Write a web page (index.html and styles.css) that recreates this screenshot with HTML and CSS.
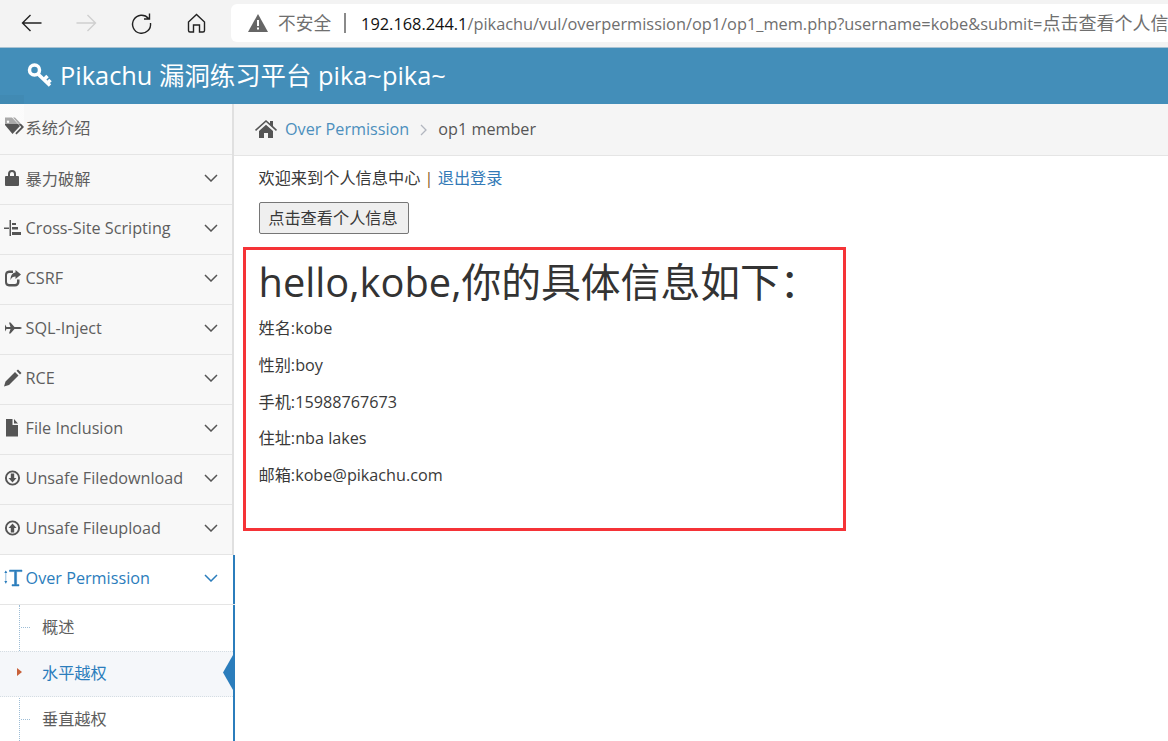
FILE: index.html
```html
<!DOCTYPE html>
<html lang="zh">
<head>
<meta charset="utf-8">
<title>Pikachu</title>
<link rel="stylesheet" href="styles.css">
</head>
<body>
<div class="chrome">
  <svg class="nav-btn" viewBox="0 0 24 24"><path d="M22 12H3M11 4l-8 8 8 8" fill="none" stroke="#222" stroke-width="1.4"/></svg>
  <svg class="nav-btn" viewBox="0 0 24 24"><path d="M2 12h19M13 4l8 8-8 8" fill="none" stroke="#cfcfcf" stroke-width="1.4"/></svg>
  <svg class="nav-btn" viewBox="0 0 24 24"><path d="M19 7.500A9 9 0 1 0 21 12M20 2.500v5.500h-5.500" fill="none" stroke="#222" stroke-width="1.4"/></svg>
  <svg class="nav-btn" viewBox="0 0 24 24"><path d="M4 11l8-7.500 8 7.500v8.500a1.500 1.500 0 0 1-1.500 1.500H15v-7H9v7H5.500A1.500 1.500 0 0 1 4 19.500z" fill="none" stroke="#222" stroke-width="1.4"/></svg>
  <div class="address">
    <svg class="warn" viewBox="0 0 20 18"><path d="M10 0l10 18H0z" fill="#666"/><path d="M9 6h2v6H9zM9 13.500h2v2H9z" fill="#fff"/></svg>
    <span class="insecure">不安全</span><span class="sep"></span>
    <span class="url"><span class="host">192.168.244.1</span>/pikachu/vul/overpermission/op1/op1_mem.php?username=kobe&amp;submit=<span class="url-cjk">点击查看个人信息</span></span>
  </div>
</div>
<header class="topbar">
  <svg class="key" viewBox="0 0 25 25"><circle cx="7.500" cy="8" r="5" fill="none" stroke="#fff" stroke-width="3.500"/><path d="M11 12l12 11.500M17 17.500l3.500-3.500M20.500 21l3-3" fill="none" stroke="#fff" stroke-width="3.500"/></svg>
  <span>Pikachu 漏洞练习平台 pika~pika~</span>
</header>
<div class="ghost"></div>
<div class="layout">
  <nav class="sidebar">
    <div class="item item-first"><svg class="ico" viewBox="0 0 18 18"><path fill-rule="evenodd" d="M1-.500h7l8 8.500-7.500 8L1 7zM4 2.500a1.200 1.200 0 1 0 0 2.400 1.200 1.200 0 0 0 0-2.400z" fill="#555"/><path d="M11-.5l9 9.500-7.500 7.500-1.200-1.200 6-6.300-8.300-9.500z" fill="#555"/></svg><span>系统介绍</span></div>
    <div class="item"><svg class="ico" viewBox="0 0 18 18"><path d="M4 7V5a4 4 0 0 1 8 0v2h2a1 1 0 0 1 1 1v8a1 1 0 0 1-1 1H2a1 1 0 0 1-1-1V8a1 1 0 0 1 1-1zm2 0h4V5a2 2 0 0 0-4 0z" fill="#555"/></svg><span>暴力破解</span><svg class="chev" viewBox="0 0 14 8"><path d="M1 1l6 6 6-6" fill="none" stroke="#555" stroke-width="1.500"/></svg></div>
    <div class="item"><svg class="ico" viewBox="0 0 18 18"><path d="M5.500 1H7v16H5.500zM8 4h4v2H8zM8 8h6v2.500H8zM8 13h9v3H8zM0 8.500h5V10H0z" fill="#555"/></svg><span>Cross-Site Scripting</span><svg class="chev" viewBox="0 0 14 8"><path d="M1 1l6 6 6-6" fill="none" stroke="#555" stroke-width="1.500"/></svg></div>
    <div class="item"><svg class="ico" viewBox="0 0 18 18"><path d="M13 10.500V13a2 2 0 0 1-2 2H5a2 2 0 0 1-2-2V6a2 2 0 0 1 2-2h4V1.500H5A4.500 4.500 0 0 0 1 6v7a4.500 4.500 0 0 0 4 4.500h6a4.500 4.500 0 0 0 4.500-4.500v-2.500z" fill="#555"/><path d="M11.500 1l5.500 4.500-5.500 4.500V7.500C9 7.500 7.500 8.500 6.500 11 6.500 7 8 4 11.500 3.500z" fill="#555"/></svg><span>CSRF</span><svg class="chev" viewBox="0 0 14 8"><path d="M1 1l6 6 6-6" fill="none" stroke="#555" stroke-width="1.500"/></svg></div>
    <div class="item"><svg class="ico" viewBox="0 0 18 18"><path d="M1 5.500l1.500 2.500h4L5 3.500h1.500L10.500 8H15c1 0 3 .5 3 1s-2 1-3 1h-4.500l-4 4.500H5L6.500 10h-4L1 12.500z" fill="#555"/></svg><span>SQL-Inject</span><svg class="chev" viewBox="0 0 14 8"><path d="M1 1l6 6 6-6" fill="none" stroke="#555" stroke-width="1.500"/></svg></div>
    <div class="item"><svg class="ico" viewBox="0 0 18 18"><path d="M0 17.500l1.500-5L11 3l3.500 3.500L5 16zM12.500 1.700 14 .5l3.500 3.500L16 5.500z" fill="#555"/></svg><span>RCE</span><svg class="chev" viewBox="0 0 14 8"><path d="M1 1l6 6 6-6" fill="none" stroke="#555" stroke-width="1.500"/></svg></div>
    <div class="item"><svg class="ico" viewBox="0 0 18 18"><path d="M2 0h6.500v6H14v11.500H2zM10 0l4 4.500h-4z" fill="#555"/></svg><span>File Inclusion</span><svg class="chev" viewBox="0 0 14 8"><path d="M1 1l6 6 6-6" fill="none" stroke="#555" stroke-width="1.500"/></svg></div>
    <div class="item"><svg class="ico" viewBox="0 0 18 18"><circle cx="8.500" cy="9" r="6.600" fill="none" stroke="#555" stroke-width="1.900"/><path d="M6.800 4.500h3.400V9h2.300l-4 4.500-4-4.500h2.300z" fill="#555"/></svg><span>Unsafe Filedownload</span><svg class="chev" viewBox="0 0 14 8"><path d="M1 1l6 6 6-6" fill="none" stroke="#555" stroke-width="1.500"/></svg></div>
    <div class="item"><svg class="ico" viewBox="0 0 18 18"><circle cx="8.500" cy="9" r="6.600" fill="none" stroke="#555" stroke-width="1.900"/><path d="M6.800 13.500h3.400V9h2.300l-4-4.500-4 4.500h2.300z" fill="#555"/></svg><span>Unsafe Fileupload</span><svg class="chev" viewBox="0 0 14 8"><path d="M1 1l6 6 6-6" fill="none" stroke="#555" stroke-width="1.500"/></svg></div>
    <div class="item item-open"><svg class="ico" viewBox="0 0 18 18"><path d="M5.500 1h12.500v1.600h-5.400v13H15V17H8v-1.400h2.500v-13H5.500zM1.800 2v12.500" fill="#2b7dbc" stroke="#2b7dbc" stroke-width=".5"/><path d="M.3 4l1.500-2.500L3.300 4zM.3 12l1.500 2.500L3.300 12z" fill="#2b7dbc"/></svg><span>Over Permission</span><svg class="chev" viewBox="0 0 14 8"><path d="M1 1l6 6 6-6" fill="none" stroke="#2b7dbc" stroke-width="1.500"/></svg></div>
    <ul class="submenu">
      <li class="sub"><span class="tick"></span>概述</li>
      <li class="sub sub-active"><span class="caret"></span>水平越权<span class="pointer"></span></li>
      <li class="sub"><span class="tick"></span>垂直越权</li>
    </ul>
  </nav>
  <main class="main">
    <div class="crumbs">
      <svg class="home" viewBox="0 0 22 18"><path d="M11 0l4 3.500V1h3v5l4 3.800-1 1.200L11 2 1 11 0 9.800zM4 11l7-6.300 7 6.300v7h-5v-5H9v5H4z" fill="#555"/></svg>
      <a class="crumb-link">Over Permission</a>
      <svg class="crumb-sep" viewBox="0 0 8 12"><path d="M1 1l5 5-5 5" fill="none" stroke="#b2b6bf" stroke-width="1.300"/></svg>
      <span>op1 member</span>
    </div>
    <div class="content">
      <p class="welcome">欢迎来到个人信息中心 <span class="bar">|</span> <a class="link">退出登录</a></p>
      <button class="btn">点击查看个人信息</button>
      <section class="card">
        <h2 class="title">hello,kobe,你的具体信息如下：</h2>
        <p class="row">姓名:kobe</p>
        <p class="row">性别:boy</p>
        <p class="row">手机:15988767673</p>
        <p class="row">住址:nba lakes</p>
        <p class="row">邮箱:kobe@pikachu.com</p>
      </section>
    </div>
  </main>
</div>
</body>
</html>
```
FILE: styles.css
```css
* { box-sizing: border-box; }
html, body { margin: 0; height: 741px; overflow: hidden; }
body {
  width: 1168px;
  background: #fff;
  color: #393939;
  font-family: "Open Sans", "Noto Sans CJK SC", sans-serif;
  font-size: 16.2px;
  position: relative;
}
.ghost {
  position: absolute;
  left: 0;
  top: 95px;
  width: 24px;
  height: 29px;
  background: linear-gradient(rgba(0, 0, 0, .03) 9px, rgba(255, 255, 255, .5) 9px);
}
.chrome {
  height: 48px;
  background: #f3f3f3;
  border-bottom: 1px solid #a9c3d3;
  display: flex;
  align-items: center;
  padding-left: 17px;
  gap: 26px;
  overflow: hidden;
}
.nav-btn { width: 29px; height: 24px; flex: none; margin-top: -1px; }
.address {
  flex: none;
  width: 960px;
  height: 38px;
  margin: -1px 0 0 -6px;
  padding: 0 0 2px 17px;
  background: #fff;
  border-radius: 6px 0 0 6px;
  display: flex;
  align-items: center;
  white-space: nowrap;
  font-size: 16.35px;
  color: #6f6f6f;
}
.warn { width: 20px; height: 18px; flex: none; margin: 2px 10px 0 0; }
.insecure { color: #6f6f6f; font-size: 17.7px; }
.sep { width: 2px; height: 20px; background: #8a8a8a; margin: 2px 15px 0 13px; flex: none; }
.host { color: #111; }
.url-cjk { font-size: 18px; }
.topbar {
  height: 56px;
  background: #438eb9;
  color: #fff;
  display: flex;
  align-items: center;
  padding: 0 0 4px 27px;
  gap: 8px;
  font-size: 25.4px;
  white-space: nowrap;
}
.key { width: 25px; height: 25px; flex: none; }
.layout { display: flex; height: 637px; }
.sidebar {
  width: 234px;
  flex: none;
  background: #f8f8f8;
  border-right: 2px solid #e0e0e0;
}
.item {
  height: 50px;
  display: flex;
  align-items: center;
  padding: 0 14px 4px 4px;
  border-bottom: 1px solid #e5e5e5;
  color: #5e5e5e;
  white-space: nowrap;
}
.item-first { height: 51px; }
.ico { width: 18px; height: 18px; flex: none; margin-right: 3.6px; overflow: visible; }
.chev { width: 14px; height: 8px; margin-left: auto; flex: none; }
.item-open {
  background: #fff;
  color: #2b7dbc;
  font-weight: 500;
  margin-right: -3px;
  padding-right: 17px;
  box-shadow: inset -2px 0 0 #2b7dbc;
}
.submenu {
  list-style: none;
  margin: 0 -3px 0 0;
  padding: 0;
  height: 136px;
  background: #fff;
  position: relative;
  box-shadow: inset -2px 0 0 #2b7dbc;
}
.submenu::before {
  content: "";
  position: absolute;
  left: 19px;
  top: 0;
  bottom: 0;
  border-left: 1px dotted #9dbdd6;
}
.sub {
  height: 46px;
  display: flex;
  align-items: center;
  padding: 0 0 4px 42px;
  color: #5e5e5e;
  position: relative;
}
.tick {
  position: absolute;
  left: 21px;
  top: 22px;
  width: 9px;
  border-top: 1px dotted #9dbdd6;
}
.sub-active {
  background: #f5f7fa;
  color: #2b7dbc;
  border-top: 1px dotted #d5dde3;
  border-bottom: 1px dotted #d5dde3;
  margin-right: 2px;
}
.caret {
  position: absolute;
  left: 17px;
  top: 16px;
  border-left: 5px solid #c86139;
  border-top: 4.5px solid transparent;
  border-bottom: 4.5px solid transparent;
}
.pointer {
  position: absolute;
  right: 0;
  top: 3px;
  width: 10px;
  height: 35px;
  background: #2b7dbc;
  clip-path: polygon(100% 0, 0 50%, 100% 100%);
}
.main { flex: 1; min-width: 0; }
.crumbs {
  height: 52px;
  background: #f5f5f5;
  border-bottom: 1px solid #e5e5e5;
  display: flex;
  align-items: center;
  padding: 0 0 2px 21px;
  color: #555;
}
.home { width: 22px; height: 18px; margin-right: 8px; }
.crumb-link { color: #4c8fbd; }
.crumb-sep { width: 8px; height: 12px; margin: 2px 10px 0 11px; }
.content { padding: 11px 0 0 25px; }
.welcome { margin: 0 0 0 -.5px; line-height: 22px; color: #393939; }
.bar { color: #8a5a20; }
.link { color: #337ab7; }
.btn {
  display: block;
  width: 150px;
  height: 32px;
  margin-top: 13px;
  padding: 0 2px 2px 0;
  background: #efefef;
  border: 1px solid #767676;
  border-radius: 2px;
  color: #393939;
  font: 16.2px "Noto Sans CJK SC", sans-serif;
}
.card {
  width: 603px;
  height: 284px;
  margin: 13px 0 0 -16px;
  border: 3px solid #f53337;
  padding: 0 0 0 12.5px;
}
.title {
  margin: 12px 0 0;
  font-size: 39.8px;
  font-weight: 400;
  line-height: 40px;
  color: #333;
}
.row { margin: 0; line-height: 22px; color: #393939; padding-top: 14.8px; }
.title + .row { padding-top: 15px; }
```
